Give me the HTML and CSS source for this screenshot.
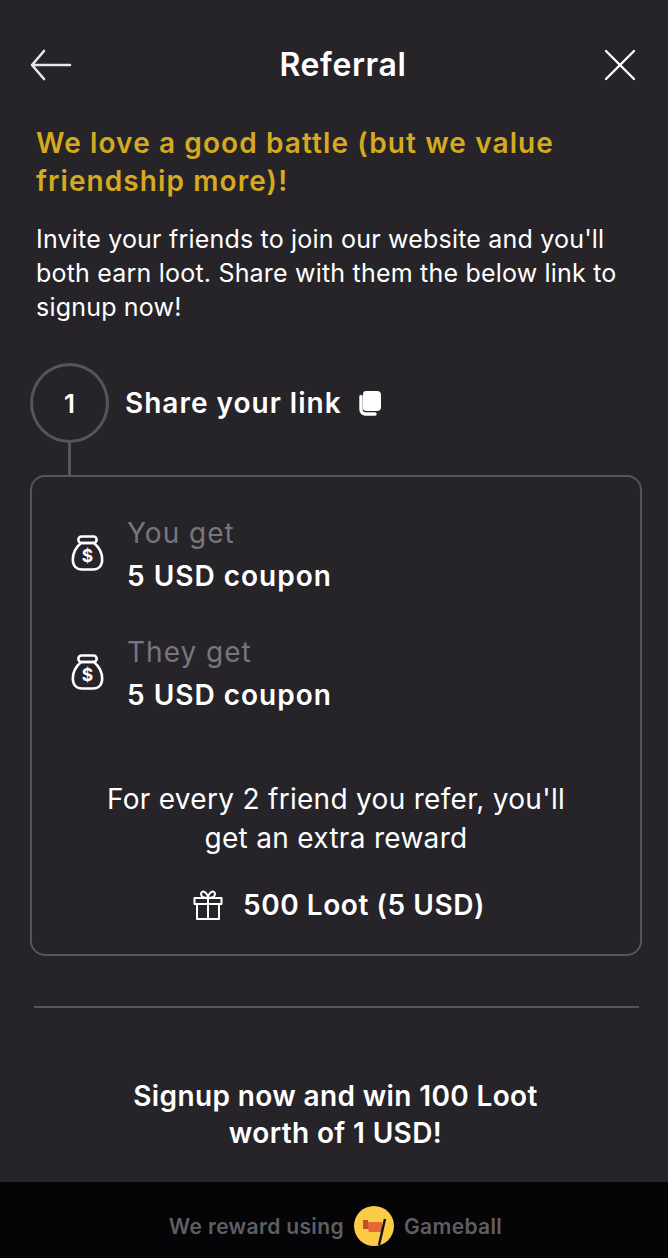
FILE: index.html
```html
<!DOCTYPE html>
<html lang="en">
<head>
<meta charset="utf-8">
<title>Referral</title>
<link rel="stylesheet" href="styles.css">
</head>
<body>
<div class="page">
  <main class="main">
    <header class="topbar">
      <svg class="back" width="42" height="32" viewBox="0 0 42 32"><path d="M40 16H3M14 2 2 16l12 14" fill="none" stroke="#e8e7ea" stroke-width="2.6" stroke-linecap="round" stroke-linejoin="round"/></svg>
      <h1 class="title">Referral</h1>
      <svg class="close" width="32" height="32" viewBox="0 0 32 32"><path d="M2 2l28 28M30 2 2 30" fill="none" stroke="#fff" stroke-width="2.4" stroke-linecap="round"/></svg>
    </header>
    <section class="intro">
      <h2 class="headline">We love a good battle (but we value friendship more)!</h2>
      <p class="lead">Invite your friends to join our website and you'll both earn loot. Share with them the below link to signup now!</p>
    </section>
    <section class="step">
      <div class="step-head">
        <div class="step-num">1</div>
        <div class="step-label">Share your link</div>
        <svg class="copy" width="24" height="26" viewBox="0 0 24 26"><path d="M8 1h11a4 4 0 0 1 4 4v12a4 4 0 0 1-4 4H8a3 3 0 0 1-3-3V4a3 3 0 0 1 3-3z" fill="#fff"/><path d="M3 6.5v13A4.5 4.5 0 0 0 7.500 24H17" fill="none" stroke="#fff" stroke-width="3.400" stroke-linecap="round"/></svg>
      </div>
      <div class="connector"></div>
      <div class="card">
        <div class="reward">
          <svg class="bag" width="33" height="38" viewBox="0 0 36 40"><g fill="none" stroke="#fff" stroke-width="2.800" stroke-linejoin="round"><rect x="8" y="2" width="20" height="7" rx="3.500"/><path d="M11 9C5 14 2 20 2 27c0 7 4 11 10 11h12c6 0 10-4 10-11 0-7-3-13-9-18z"/></g><text class="bag-sign" x="18" y="30" text-anchor="middle">$</text></svg>
          <div class="reward-text"><div class="reward-label">You get</div><div class="reward-value">5 USD coupon</div></div>
        </div>
        <div class="reward">
          <svg class="bag" width="33" height="38" viewBox="0 0 36 40"><g fill="none" stroke="#fff" stroke-width="2.800" stroke-linejoin="round"><rect x="8" y="2" width="20" height="7" rx="3.500"/><path d="M11 9C5 14 2 20 2 27c0 7 4 11 10 11h12c6 0 10-4 10-11 0-7-3-13-9-18z"/></g><text class="bag-sign" x="18" y="30" text-anchor="middle">$</text></svg>
          <div class="reward-text"><div class="reward-label">They get</div><div class="reward-value">5 USD coupon</div></div>
        </div>
        <p class="extra">For every 2 friend you refer, you'll<br>get an extra reward</p>
        <div class="loot">
          <svg class="gift" width="30" height="30" viewBox="0 0 30 30"><g fill="none" stroke="#fff" stroke-width="2" stroke-linejoin="round"><rect x="1.500" y="8" width="27" height="6"/><path d="M4 14v15h22V14M15 8v21M15 8C11 8 8 6.500 8 4c0-2 2-3 3.500-2C13.500 3 15 6 15 8zm0 0c4 0 7-1.500 7-4 0-2-2-3-3.500-2C16.500 3 15 6 15 8z"/></g></svg>
          <span class="loot-text">500 Loot (5 USD)</span>
        </div>
      </div>
    </section>
    <hr class="rule">
    <p class="signup">Signup now and win 100 Loot<br>worth of 1 USD!</p>
  </main>
  <footer class="footer">
    <span>We reward using</span>
    <svg class="logo" width="40" height="40" viewBox="0 0 40 40"><circle cx="20" cy="20" r="20" fill="#fdcb45"/><path d="M9 14h5v2h14l1 10H15l-1-3H9z" fill="#e5673a"/><path d="M9 14h5v9H9z" fill="#c2502d"/><path d="M31 13 25 39" stroke="#15131a" stroke-width="2.400" fill="none"/></svg>
    <span>Gameball</span>
  </footer>
</div>
</body>
</html>
```
FILE: styles.css
```css
* { box-sizing: border-box; }
html, body { margin: 0; padding: 0; }
body { font-family: "Inter", "Liberation Sans", sans-serif; color: #fff; background: #262429; }
.page { width: 668px; height: 1258px; display: flex; flex-direction: column; overflow: hidden; }
.main { flex: 1; min-height: 0; padding: 0 27px 0 30px; }
.topbar { height: 124px; padding-top: 49px; display: flex; align-items: flex-start; justify-content: space-between; }
.back { display: block; }
.close { display: block; margin-right: 5px; }
.title { margin: -2px 0 0 10px; font-size: 32px; line-height: 36px; font-weight: 600; letter-spacing: .6px; }
.intro { padding-left: 6px; }
.headline { margin: 0; font-size: 28px; line-height: 38px; font-weight: 600; letter-spacing: 1.1px; color: #d5aa1e; }
.lead { margin: 22px 0 0; font-size: 25px; line-height: 34px; font-weight: 400; letter-spacing: .2px; color: #fff; }
.step { margin-top: 39px; }
.step-head { display: flex; align-items: center; height: 80px; }
.step-num { width: 79px; height: 80px; border: 3px solid #56555a; border-radius: 50%; display: flex; align-items: center; justify-content: center; font-size: 26px; font-weight: 600; }
.step-label { margin-left: 16px; font-size: 28px; font-weight: 600; letter-spacing: 1px; }
.copy { margin-left: 16px; }
.connector { width: 3px; height: 32px; margin-left: 38px; background: #56555a; }
.card { width: 612px; height: 481px; border: 2px solid #56555a; border-radius: 15px; padding: 40px 0 0 39px; }
.reward { display: flex; align-items: center; height: 75px; margin-bottom: 44px; }
.bag { flex: none; margin-bottom: 4px; }
.bag-sign { font-family: "Inter", sans-serif; font-size: 19px; font-weight: 700; fill: #fff; }
.reward-text { margin-left: 23px; }
.reward-label { font-size: 28px; line-height: 34px; letter-spacing: 1px; color: #77767b; }
.reward-value { margin-top: 9px; font-size: 28px; line-height: 34px; font-weight: 600; letter-spacing: 1px; }
.extra { margin: 69px 36px 0 -3px; font-size: 28px; line-height: 39px; letter-spacing: .3px; text-align: center; }
.loot { display: flex; align-items: center; justify-content: center; margin: 30px 30px 0 -3px; }
.loot-text { margin-left: 20px; font-size: 28px; font-weight: 600; letter-spacing: .55px; }
.rule { height: 2px; margin: 50px 2px 0 4px; border: 0; background: #56555a; }
.signup { margin: 70px 0 0; font-size: 28px; line-height: 37px; font-weight: 600; letter-spacing: .37px; text-align: center; }
.footer { flex: none; height: 76px; padding: 12px 0 0 3px; background: #050407; display: flex; align-items: center; justify-content: center; gap: 10px; font-size: 21px; font-weight: 600; letter-spacing: .35px; color: #5f5e63; }
```
